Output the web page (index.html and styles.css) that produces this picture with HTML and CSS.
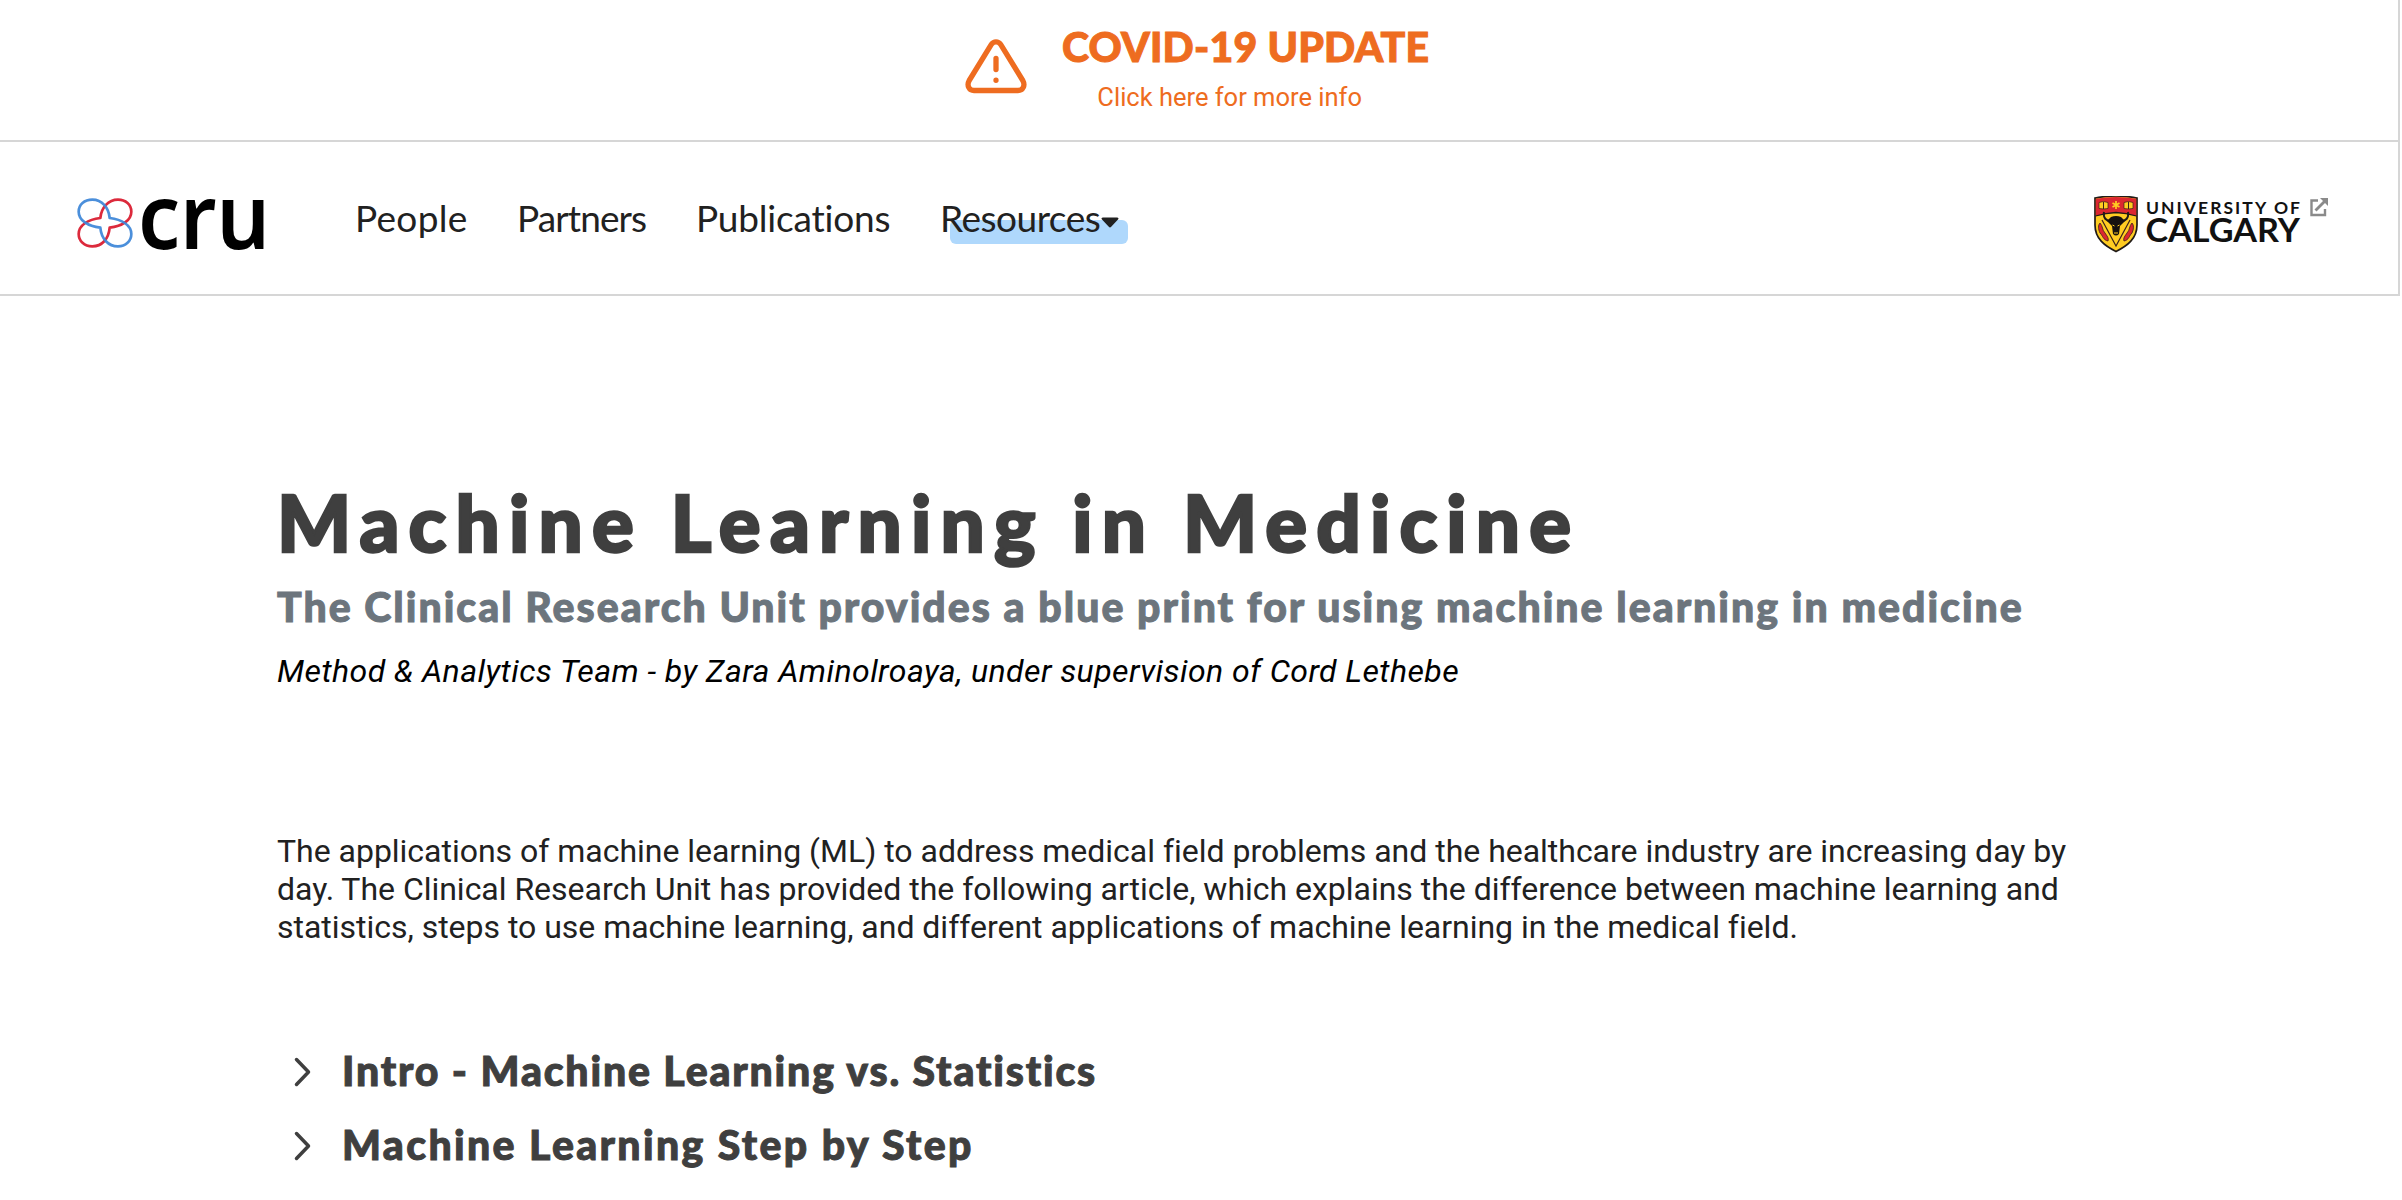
FILE: index.html
```html
<!DOCTYPE html>
<html lang="en">
<head>
<meta charset="utf-8">
<title>Machine Learning in Medicine</title>
<link rel="stylesheet" href="styles.css">
</head>
<body>
<header class="site-header">
  <a class="alert">
    <svg class="alert-icon" width="64" height="58" viewBox="0 0 64 58" fill="none" stroke="currentColor" stroke-width="5.3" stroke-linecap="round" stroke-linejoin="round"><path d="M27.500 7.200 5.200 43.500C2.500 48.500 5 53.500 10 53.500h44c5 0 7.500-5 4.800-10L36.500 7.200c-2.200-3.200-6.800-3.200-9 0Z"/><path d="M32 21.500v11M32 43.200v.1"/></svg>
    <span class="alert-copy"><strong class="alert-title">COVID-19 UPDATE</strong><span class="alert-link">Click here for more info</span></span>
  </a>
  <div class="bar">
    <svg class="cru" width="200" height="66" viewBox="0 0 600 198">
      <g fill="none" stroke-width="8" stroke-linejoin="round">
        <path stroke="#dc2a3c" d="M178 65C178 44 161 29 138 29C109 29 88 53 85 84C48 88 20 106 20 132C20 153 37 169 61 169C90 169 110 147 113 113C150 109 178 91 178 65Z"/>
        <path stroke="#3d87d8" stroke-opacity=".93" d="M20 65C20 44 37 29 61 29C90 29 110 53 113 84C150 88 178 106 178 132C178 153 161 169 138 169C109 169 88 147 85 113C48 109 20 91 20 65Z"/>
      </g>
      <text class="cru-word" x="198" y="177" textLength="396" lengthAdjust="spacingAndGlyphs">cru</text>
    </svg>
    <nav class="nav">
      <a class="people">People</a><a class="partners">Partners</a><a class="publications">Publications</a><a class="resources">Resources<svg class="caret" width="18" height="11" viewBox="0 0 18 11"><path d="M2 .5h14c1.500 0 2 1 1 2L10.200 9.800c-.8.8-1.600.8-2.400 0L1 2.500c-1-1-.5-2 1-2Z" fill="#212121"/></svg></a>
    </nav>
    <svg class="ucalgary" width="236" height="60" viewBox="0 0 236 60">
      <path d="M1 2Q22-2 43 2V29C43 43 33 50 22 55.500C11 50 1 43 1 29Z" fill="#fc2" stroke="#211b18" stroke-width="1.700"/>
      <path d="M1.800 2.800Q22-1 42.200 2.800V20Q32 17 22 16.500Q12 17 1.800 20Z" fill="#dc2730"/>
      <path d="M1.500 20Q12 17 22 16.500Q32 17 42.500 20" fill="none" stroke="#211b18" stroke-width="1.300"/>
      <path d="M5 6.500 9.500 5.500 14 6.500V12.500L9.500 13 5 12.500ZM30 6.500 34.500 5.500 39 6.500V12.500L34.500 13 30 12.500Z" fill="#fc2" stroke="#3a211a" stroke-width=".7"/>
      <path d="M9.500 6V13M34.500 6V13" stroke="#3a211a"/>
      <path d="M22 5v8M18.500 7l7 4M25.500 7l-7 4" stroke="#fc2" stroke-width="1.700"/>
      <path d="M6 27C9 30 8 34 11 37C13 40 15 42 14 45C9 44 9 40 6 37C4 33 4 29 6 27ZM38 27C35 30 36 34 33 37C31 40 29 42 30 45C35 44 35 40 38 37C40 33 40 29 38 27Z" fill="#dc2730" stroke="#3a211a" stroke-width=".8"/>
      <path d="M8 24 22 50 36 24" fill="none" stroke="#3a211a" stroke-width="1.200"/>
      <path d="M10 16C9 22 12 25 17 25M34 16C35 22 32 25 27 25" fill="none" stroke="#211b18" stroke-width="2"/>
      <path d="M17 21Q22 19 27 21L31 25 28 28 26 30 25 38Q22 41 19 38L18 30 16 28 13 25Z" fill="#17120f"/>
      <path d="M18.500 29l2 1M25.500 29l-2 1M20 37h4" stroke="#fc2" stroke-width="1"/>
      <text class="uni" x="52" y="17.500" textLength="154" lengthAdjust="spacing">UNIVERSITY OF</text>
      <text class="city" x="51.500" y="46" textLength="154.500" lengthAdjust="spacingAndGlyphs">CALGARY</text>
      <path d="M224 4.500h-6.500v14.500h13.500v-6" fill="none" stroke="#8a8a8a" stroke-width="2.400"/>
      <path d="M221.500 14.500 231 5" stroke="#8a8a8a" stroke-width="2.800"/><path d="M226 2h8v8Z" fill="#8a8a8a"/>
    </svg>
  </div>
</header>
<main class="article">
  <h1>Machine Learning in Medicine</h1>
  <h2>The Clinical Research Unit provides a blue print for using machine learning in medicine</h2>
  <p class="byline">Method &amp; Analytics Team - by Zara Aminolroaya, under supervision of Cord Lethebe</p>
  <p class="intro">The applications of machine learning (ML) to address medical field problems and the healthcare industry are increasing day by day. The Clinical Research Unit has provided the following article, which explains the difference between machine learning and statistics, steps to use machine learning, and different applications of machine learning in the medical field.</p>
  <section class="sections">
    <div class="section"><svg width="18" height="30" viewBox="0 0 18 30"><path d="M2.500 2.500 14.500 15 2.500 27.500"/></svg><h3 class="first">Intro - Machine Learning vs. Statistics</h3></div>
    <div class="section"><svg width="18" height="30" viewBox="0 0 18 30"><path d="M2.500 2.500 14.500 15 2.500 27.500"/></svg><h3 class="second">Machine Learning Step by Step</h3></div>
  </section>
</main>
</body>
</html>
```
FILE: styles.css
```css
body { margin: 0; background: #fff; color: #212121; font-family: Roboto, sans-serif; }
.site-header { box-sizing: border-box; width: 2400px; height: 296px; border-right: 2px solid #d6d6d6; }
.alert { box-sizing: border-box; display: flex; height: 142px; padding: 22px 0 0 964px; border-bottom: 2px solid #d6d6d6; color: #ee6c20; gap: 34px; }
.alert-icon { margin-top: 14.5px; }
.alert-copy { display: flex; flex-direction: column; align-items: center; gap: 10px; }
.alert-title { font: 900 41px/50px Lato, sans-serif; letter-spacing: .2px; -webkit-text-stroke: 1px currentColor; }
.alert-link { margin-right: 32px; font-size: 25.500px; line-height: 30px; }
.bar { box-sizing: border-box; display: flex; height: 154px; padding: 48px 68px 0 72px; border-bottom: 2px solid #d6d6d6; }
.cru { overflow: visible; }
.cru-word { font: 600 272px "Noto Sans", sans-serif; fill: #000; }
.nav { display: grid; grid-template-columns: 162px 179px 244px 190px; margin-left: 83px; font: 400 37px/50px Lato, sans-serif; white-space: nowrap; }
.nav a { height: 50px; margin-top: 3px; }
.people { letter-spacing: .3px; }
.partners { letter-spacing: -.9px; }
.publications { letter-spacing: -.2px; }
.resources { position: relative; letter-spacing: -.5px; isolation: isolate; }
.resources::before { content: ""; position: absolute; z-index: -1; left: 10px; top: 27px; width: 178px; height: 24px; border-radius: 6px; background: #afd8fc; }
.caret { margin: 0 0 4px 1px; }
.ucalgary { margin: 6px 0 0 auto; }
.uni { font: 700 17.5px Lato, sans-serif; fill: #111; }
.city { font: 700 32px Lato, sans-serif; fill: #111; }
.article { padding: 181px 277px 0; }
h1, h2, h3 { margin: 0; width: max-content; font: 900 41px/50px Lato, sans-serif; white-space: nowrap; color: #3f3f3f; -webkit-text-stroke: 1px currentColor; }
h1 { font-size: 78px; line-height: 90px; letter-spacing: 9.200px; -webkit-text-stroke-width: 2.500px; }
h2 { margin-top: 15px; letter-spacing: 2px; color: #6c757d; }
p { margin: 0; font-size: 32px; line-height: 38px; }
.byline { margin-top: 20px; letter-spacing: .43px; font-style: italic; color: #000; }
.intro { margin-top: 142px; width: 1800px; letter-spacing: -.02px; }
.sections { display: flex; flex-direction: column; gap: 24px; margin-top: 100px; }
.section { display: flex; gap: 30px; padding-left: 17px; }
.section svg { margin-top: 10.5px; fill: none; stroke: #3f3f3f; stroke-width: 3.500; stroke-linecap: round; stroke-linejoin: round; }
.first { letter-spacing: 1.820px; }
.second { letter-spacing: 2.350px; }
```
